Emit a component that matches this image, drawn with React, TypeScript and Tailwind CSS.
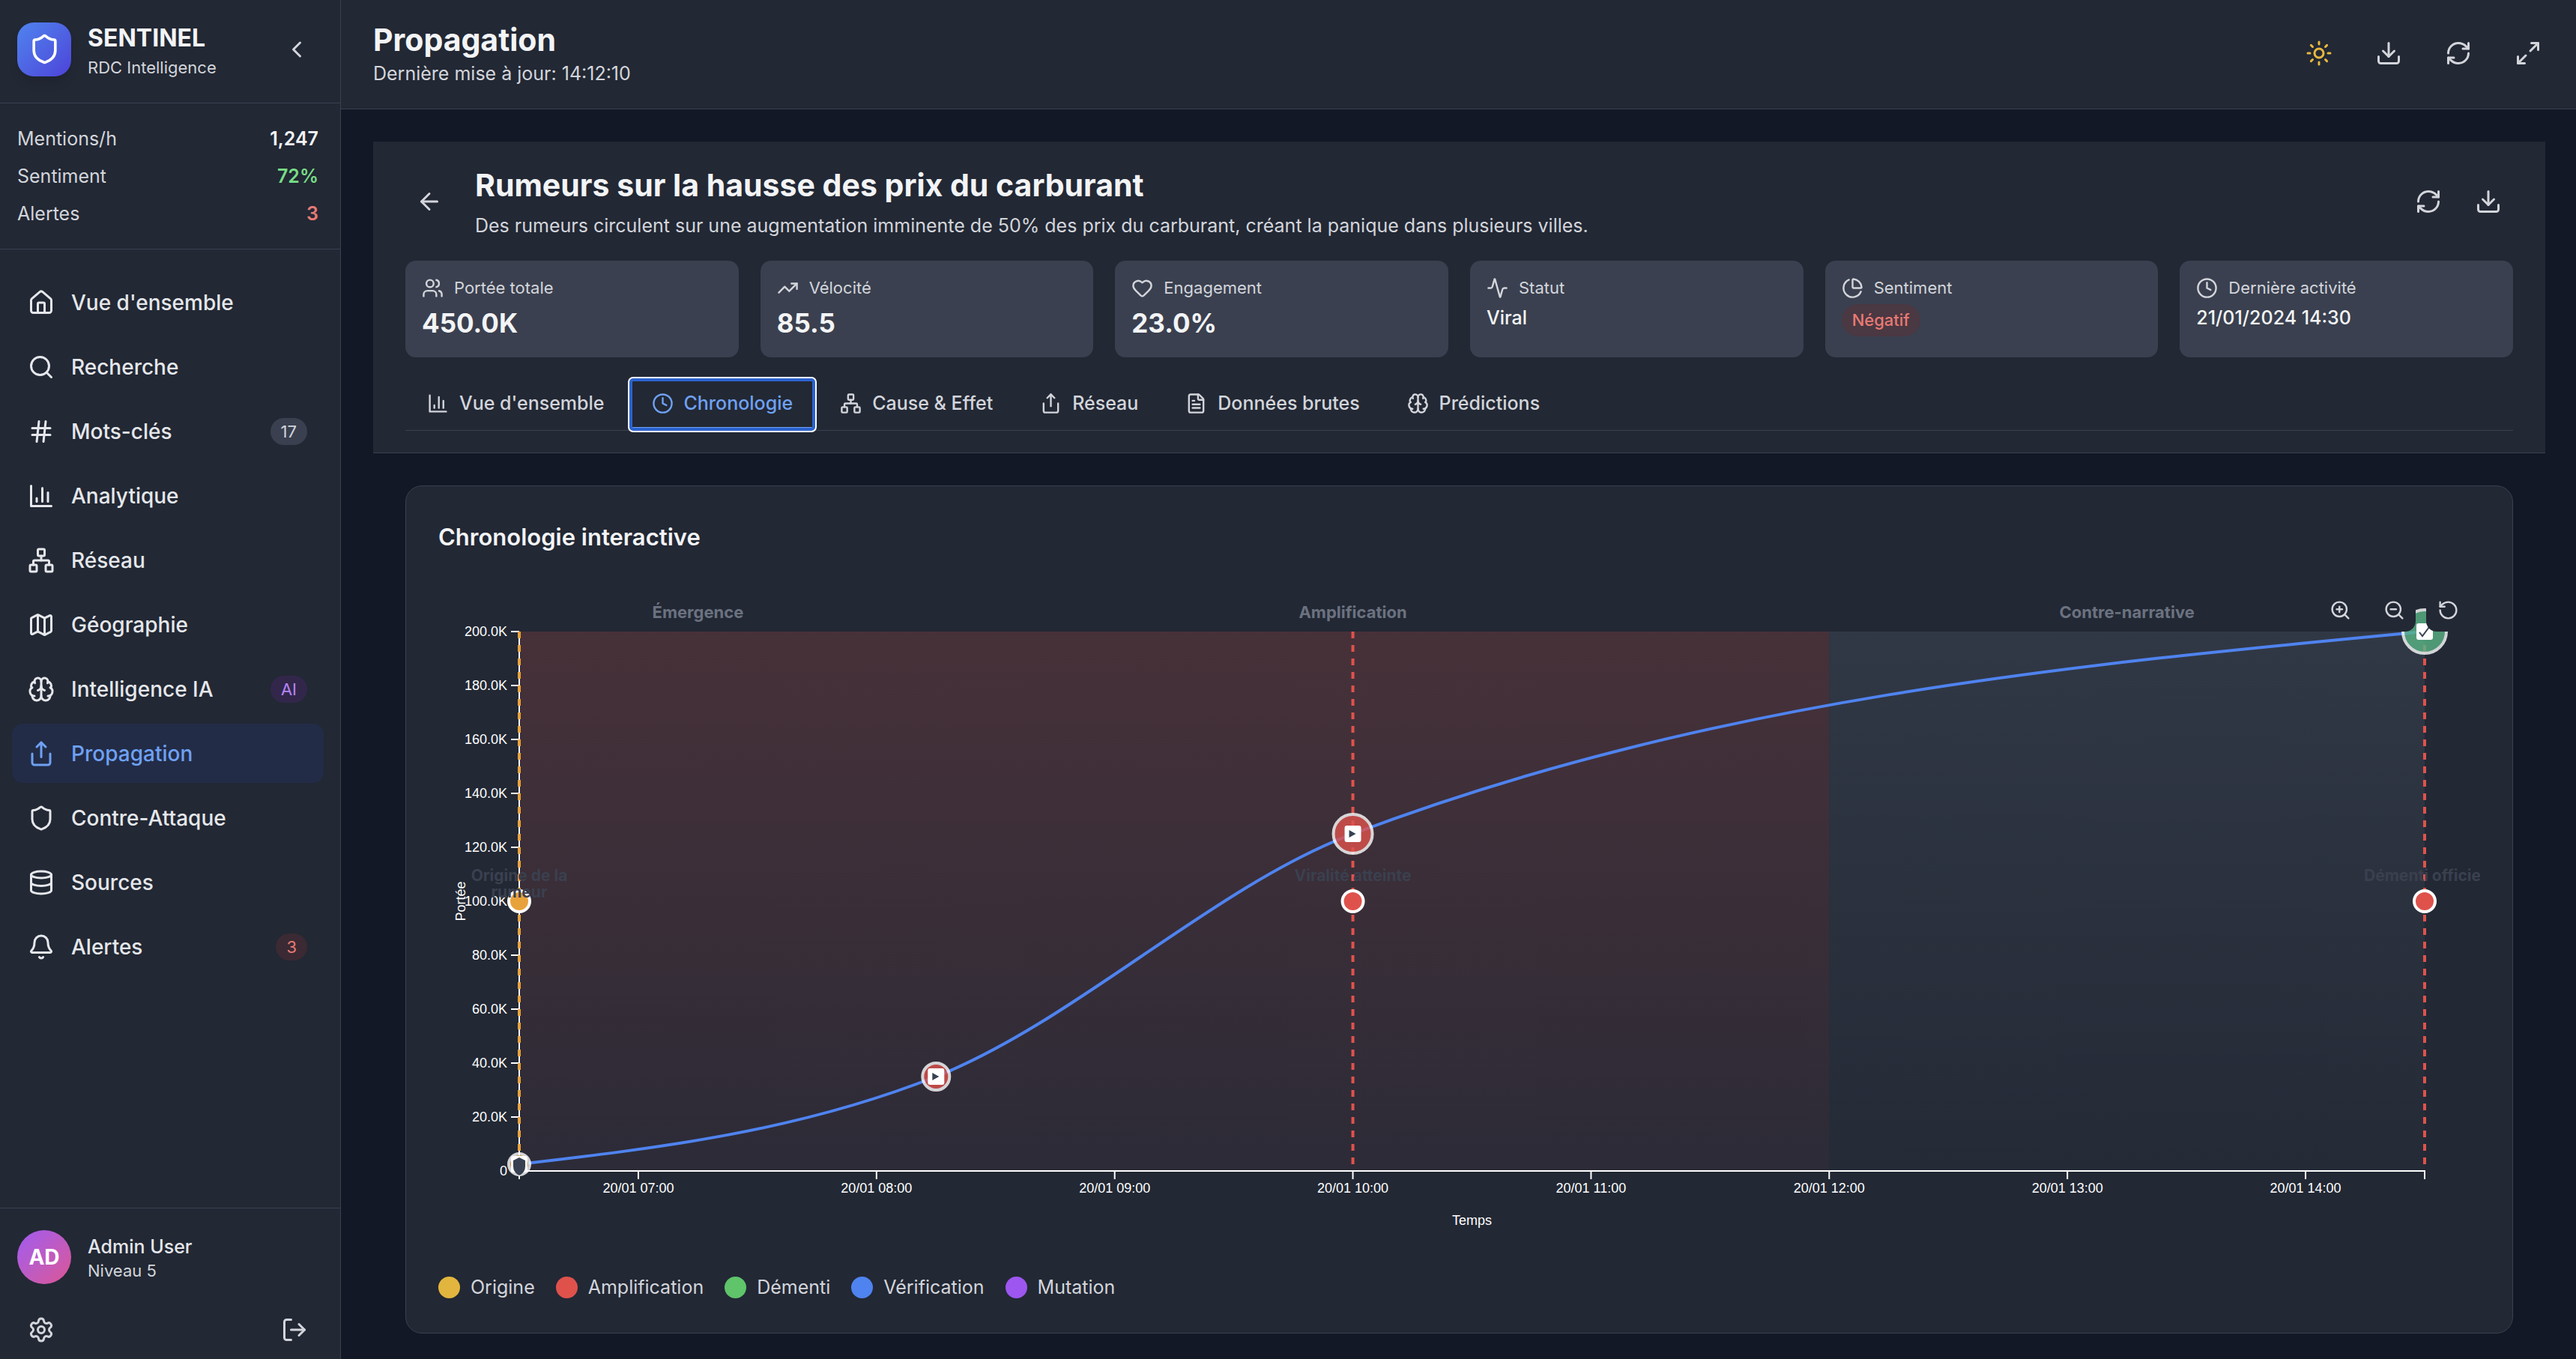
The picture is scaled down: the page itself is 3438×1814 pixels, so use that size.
import React from "react";
import {
  Activity,
  Bell,
  Brain,
  ChartPie,
  ChevronLeft,
  Clock,
  Database,
  Download,
  ArrowLeft,
  FileText,
  Hash,
  Heart,
  House,
  LogOut,
  Map as MapIcon,
  Maximize2,
  Network,
  RefreshCw,
  RotateCcw,
  Search,
  Settings,
  Share,
  Shield,
  Sun,
  TrendingUp,
  Users,
  ZoomIn,
  ZoomOut,
} from "lucide-react";

type IconType = React.ComponentType<{ className?: string; strokeWidth?: number }>;

function BarChartIcon({ className }: { className?: string }) {
  return (
    <svg
      className={className}
      viewBox="0 0 24 24"
      fill="none"
      stroke="currentColor"
      strokeWidth={2}
      strokeLinecap="round"
      strokeLinejoin="round"
      aria-hidden="true"
    >
      <path d="M3 3v18h18" />
      <path d="M18 17V9" />
      <path d="M13 17V5" />
      <path d="M8 17v-3" />
    </svg>
  );
}

const stats = [
  { label: "Mentions/h", value: "1,247", color: "text-[#f3f4f6]" },
  { label: "Sentiment", value: "72%", color: "text-[#77dd85]" },
  { label: "Alertes", value: "3", color: "text-[#e87a74]" },
];

const navItems: { label: string; icon: IconType; badge?: string; badgeClass?: string; active?: boolean }[] = [
  { label: "Vue d'ensemble", icon: House },
  { label: "Recherche", icon: Search },
  { label: "Mots-clés", icon: Hash, badge: "17", badgeClass: "bg-[#3a404f] text-[#d3d5db]" },
  { label: "Analytique", icon: BarChartIcon },
  { label: "Réseau", icon: Network },
  { label: "Géographie", icon: MapIcon },
  { label: "Intelligence IA", icon: Brain, badge: "AI", badgeClass: "bg-[#32274b] text-[#b685f4]" },
  { label: "Propagation", icon: Share, active: true },
  { label: "Contre-Attaque", icon: Shield },
  { label: "Sources", icon: Database },
  { label: "Alertes", icon: Bell, badge: "3", badgeClass: "bg-[#3b2a33] text-[#e87a74]" },
];

function Sidebar() {
  return (
    <aside className="flex w-[455px] shrink-0 flex-col border-r border-[#3a404f] bg-[#222834]">
      <div className="flex items-center border-b border-[#3a404f] pt-[26px] pr-[29px] pb-[32px] pl-[23px]">
        <div className="flex size-[72px] items-center justify-center rounded-[22px] bg-linear-to-br from-[#4f83ef] to-[#4d42d8] text-white shadow-lg">
          <Shield className="size-[43px]" />
        </div>
        <div className="ml-[22px] flex-1">
          <div className="text-[32px] leading-[50px] font-bold text-[#f3f4f6]">SENTINEL</div>
          <div className="text-[22px] leading-[29px] text-[#d3d5db]">RDC Intelligence</div>
        </div>
        <button type="button" aria-label="Réduire le menu" className="p-[11px] text-[#d3d5db]">
          <ChevronLeft className="size-[36px]" />
        </button>
      </div>

      <dl className="flex flex-col gap-[14px] border-b border-[#3a404f] pt-[29px] pr-[29px] pb-[29px] pl-[23px] text-[25px] leading-[36px]">
        {stats.map((s) => (
          <div key={s.label} className="flex justify-between">
            <dt className="text-[#d3d5db]">{s.label}</dt>
            <dd className={"font-semibold " + s.color}>{s.value}</dd>
          </div>
        ))}
      </dl>

      <nav className="flex flex-1 flex-col gap-[7px] pt-[31px] pr-[22px] pl-[16px]">
        {navItems.map(({ label, icon: Icon, badge, badgeClass, active }) => (
          <a
            key={label}
            href="#"
            aria-current={active ? "page" : undefined}
            className={
              "flex h-[79px] items-center gap-[22px] rounded-[14px] pr-[22px] pl-[21px] text-[28px] font-medium " +
              (active ? "bg-[#222c47] text-[#6fa1f3]" : "text-[#e5e7eb]")
            }
          >
            <Icon className="size-[36px] shrink-0" />
            <span className="flex-1">{label}</span>
            {badge && (
              <span className={"rounded-full px-[14px] text-[22px] leading-[36px] font-normal " + badgeClass}>
                {badge}
              </span>
            )}
          </a>
        ))}
      </nav>

      <div className="border-t border-[#3a404f] pt-[29px] pr-[29px] pb-[7px] pl-[23px]">
        <div className="flex items-center gap-[22px]">
          <div className="flex size-[72px] items-center justify-center rounded-full bg-linear-to-br from-[#a058f2] to-[#dc5393] text-[28px] font-bold text-white">
            AD
          </div>
          <div>
            <div className="text-[25px] leading-[36px] font-medium text-[#e5e7eb]">Admin User</div>
            <div className="text-[22px] leading-[29px] text-[#d3d5db]">Niveau 5</div>
          </div>
        </div>
        <div className="mt-[29px] flex justify-between text-[#d3d5db]">
          <button type="button" aria-label="Paramètres" className="p-[14px]">
            <Settings className="size-[36px]" />
          </button>
          <button type="button" aria-label="Déconnexion" className="p-[14px]">
            <LogOut className="size-[36px]" />
          </button>
        </div>
      </div>
    </aside>
  );
}

const headerActions: { label: string; icon: IconType; color: string }[] = [
  { label: "Thème clair", icon: Sun, color: "text-[#e9b83e]" },
  { label: "Télécharger", icon: Download, color: "text-[#d3d5db]" },
  { label: "Actualiser", icon: RefreshCw, color: "text-[#d3d5db]" },
  { label: "Plein écran", icon: Maximize2, color: "text-[#d3d5db]" },
];

function TopBar() {
  return (
    <header className="flex items-center justify-between border-b border-[#3a404f] bg-[#222834] pt-[26px] pr-[32px] pb-[29px] pl-[43px]">
      <div>
        <h1 className="text-[41px] leading-[54px] font-bold text-[#f3f4f6]">Propagation</h1>
        <p className="text-[25px] leading-[36px] text-[#d3d5db]">Dernière mise à jour: 14:12:10</p>
      </div>
      <div className="flex gap-[29px]">
        {headerActions.map(({ label, icon: Icon, color }) => (
          <button key={label} type="button" aria-label={label} className={"p-[14px] " + color}>
            <Icon className="size-[36px]" />
          </button>
        ))}
      </div>
    </header>
  );
}

const metrics: { label: string; icon: IconType; value: string; kind: "number" | "text" | "badge" }[] = [
  { label: "Portée totale", icon: Users, value: "450.0K", kind: "number" },
  { label: "Vélocité", icon: TrendingUp, value: "85.5", kind: "number" },
  { label: "Engagement", icon: Heart, value: "23.0%", kind: "number" },
  { label: "Statut", icon: Activity, value: "Viral", kind: "text" },
  { label: "Sentiment", icon: ChartPie, value: "Négatif", kind: "badge" },
  { label: "Dernière activité", icon: Clock, value: "21/01/2024 14:30", kind: "text" },
];

const metricClass = {
  number: "text-[35px] leading-[50px] font-bold text-[#f3f4f6]",
  text: "text-[25px] leading-[36px] font-medium text-[#f3f4f6]",
  badge: "w-fit rounded-full bg-[#4a3842] px-[14px] py-[7px] text-[22px] leading-[29px] font-medium text-[#e87a74]",
};

const tabs: { label: string; icon: IconType; active?: boolean }[] = [
  { label: "Vue d'ensemble", icon: BarChartIcon },
  { label: "Chronologie", icon: Clock, active: true },
  { label: "Cause & Effet", icon: Network },
  { label: "Réseau", icon: Share },
  { label: "Données brutes", icon: FileText },
  { label: "Prédictions", icon: Brain },
];

function RumorPanel() {
  return (
    <section className="border-b border-[#3a404f] bg-[#222834] px-[43px] py-[29px]">
      <div className="flex items-center gap-[29px]">
        <button type="button" aria-label="Retour" className="p-[14px] text-[#d3d5db]">
          <ArrowLeft className="size-[36px]" />
        </button>
        <div className="flex-1">
          <h2 className="text-[41px] leading-[58px] font-bold text-[#f3f4f6]">
            Rumeurs sur la hausse des prix du carburant
          </h2>
          <p className="mt-[7px] text-[25px] leading-[36px] text-[#d3d5db]">
            Des rumeurs circulent sur une augmentation imminente de 50% des prix du carburant, créant la panique dans
            plusieurs villes.
          </p>
        </div>
        <div className="flex gap-[14px] text-[#d3d5db]">
          <button type="button" aria-label="Actualiser la rumeur" className="p-[15px]">
            <RefreshCw className="size-[36px]" />
          </button>
          <button type="button" aria-label="Exporter la rumeur" className="p-[15px]">
            <Download className="size-[36px]" />
          </button>
        </div>
      </div>

      <div className="mt-[29px] grid grid-cols-6 gap-[29px]">
        {metrics.map(({ label, icon: Icon, value, kind }) => (
          <div key={label} className="rounded-[14px] bg-[#3a404f] p-[22px] pb-[21px]">
            <div className="flex items-center gap-[14px] text-[22px] leading-[29px] text-[#d3d5db]">
              <Icon className="size-[29px]" />
              {label}
            </div>
            <div className={"mt-[7px] " + metricClass[kind]}>{value}</div>
          </div>
        ))}
      </div>

      <div role="tablist" className="mt-[29px] flex gap-[5px] border-b border-[#3a404f]">
        {tabs.map(({ label, icon: Icon, active }) => (
          <button
            key={label}
            type="button"
            role="tab"
            aria-selected={!!active}
            className={
              "flex items-center gap-[14px] border-b-4 px-[29px] py-[14px] text-[25px] leading-[36px] font-medium " +
              (active
                ? "rounded-[4px] border-[#6fa1f3] text-[#6fa1f3] shadow-[0_0_0_3px_#ffffff] outline-4 -outline-offset-3 outline-[#2b62cf]"
                : "border-transparent text-[#d3d5db]")
            }
          >
            <Icon className="size-[29px]" />
            {label}
          </button>
        ))}
      </div>
    </section>
  );
}

/* Chart geometry, in the units of the drawing's view box. */
const VIEW_W = 2725;
const VIEW_H = 900;
const PLOT = { left: 108, right: 2651, top: 72, bottom: 792 };
const START_HOUR = 6.5;
const END_HOUR = 14.5;

const xAt = (hour: number) =>
  PLOT.left + ((hour - START_HOUR) / (END_HOUR - START_HOUR)) * (PLOT.right - PLOT.left);
const yAt = (reach: number) => PLOT.bottom - (reach / 200) * (PLOT.bottom - PLOT.top);

const points = [
  { hour: 6.5, reach: 2.5 },
  { hour: 8.25, reach: 35 },
  { hour: 10, reach: 125 },
  { hour: 14.5, reach: 200 },
].map((p) => ({ x: xAt(p.hour), y: yAt(p.reach) }));

/* Monotone cubic interpolation through the points. */
function monotonePath(pts: { x: number; y: number }[]) {
  const n = pts.length;
  const h = pts.slice(1).map((p, i) => p.x - pts[i].x);
  const s = pts.slice(1).map((p, i) => (p.y - pts[i].y) / h[i]);
  const m: number[] = new Array(n).fill(0);
  for (let i = 1; i < n - 1; i++) {
    const p = (s[i - 1] * h[i] + s[i] * h[i - 1]) / (h[i - 1] + h[i]);
    m[i] =
      (Math.sign(s[i - 1]) + Math.sign(s[i])) * Math.min(Math.abs(s[i - 1]), Math.abs(s[i]), Math.abs(p) / 2);
  }
  m[0] = (3 * s[0] - m[1]) / 2;
  m[n - 1] = (3 * s[n - 2] - m[n - 2]) / 2;
  let d = `M${pts[0].x},${pts[0].y}`;
  for (let i = 0; i < n - 1; i++) {
    const a = pts[i];
    const b = pts[i + 1];
    const t = h[i] / 3;
    d += `C${a.x + t},${a.y + t * m[i]} ${b.x - t},${b.y - t * m[i + 1]} ${b.x},${b.y}`;
  }
  return d;
}

const yTicks = [0, 20, 40, 60, 80, 100, 120, 140, 160, 180, 200];
const xTicks = [7, 8, 9, 10, 11, 12, 13, 14];
const phases = [
  { label: "Émergence", from: 6.5, to: 8 },
  { label: "Amplification", from: 8, to: 12 },
  { label: "Contre-narrative", from: 12, to: 14.5 },
];

function Tile({ x, y }: { x: number; y: number }) {
  return <rect x={x - 11} y={y - 11} width={22} height={22} rx={3} fill="#ffffff" />;
}

function PlayMarker({ x, y, r }: { x: number; y: number; r: number }) {
  return (
    <g>
      <circle cx={x} cy={y} r={r} fill="#df524c" stroke="#ffffff" strokeWidth={4} opacity={0.8} />
      <Tile x={x} y={y} />
      <path d={`M${x - 5},${y - 5} l9,5 l-9,5 z`} fill="#374151" />
    </g>
  );
}

function TimelineChart() {
  const mid = yAt(100);
  const events = [
    { hour: 6.5, color: "#e8a23c" },
    { hour: 10, color: "#df524c" },
    { hour: 14.5, color: "#df524c" },
  ];
  return (
    <svg
      viewBox={`0 0 ${VIEW_W} ${VIEW_H}`}
      className="block w-full overflow-hidden"
      role="img"
      aria-label="Portée de la rumeur dans le temps"
    >
      <defs>
        <linearGradient id="spread" x1="0" y1="0" x2="0" y2="1">
          <stop offset="0" stopColor="#473139" />
          <stop offset="1" stopColor="#2c2b37" />
        </linearGradient>
        <linearGradient id="counter" x1="0" y1="0" x2="0" y2="1">
          <stop offset="0" stopColor="#313845" />
          <stop offset="1" stopColor="#242b37" />
        </linearGradient>
      </defs>

      <rect x={PLOT.left} y={PLOT.top} width={xAt(12) - PLOT.left} height={720} fill="url(#spread)" />
      <rect x={xAt(12)} y={PLOT.top} width={PLOT.right - xAt(12)} height={720} fill="url(#counter)" />

      <g fontFamily="Inter, sans-serif" fontSize={22} fontWeight={700} fill="#6b7280" textAnchor="middle">
        {phases.map((p) => (
          <text key={p.label} x={(xAt(p.from) + xAt(p.to)) / 2} y={54}>
            {p.label}
          </text>
        ))}
      </g>

      <g stroke="#ffffff" strokeWidth={2} fill="none">
        <path d={`M${PLOT.left},${PLOT.top} V${PLOT.bottom}`} />
        <path d={`M${PLOT.left},${PLOT.bottom + 11} V${PLOT.bottom} H${PLOT.right} v11`} />
        {yTicks.map((t) => (
          <path key={t} d={`M${PLOT.left - 11},${yAt(t)} h11`} />
        ))}
        {xTicks.map((t) => (
          <path key={t} d={`M${xAt(t)},${PLOT.bottom} v11`} />
        ))}
      </g>

      <g fontFamily="'Liberation Sans', Arial, sans-serif" fontSize={18} fill="#ffffff">
        {yTicks.map((t) => (
          <text key={t} x={PLOT.left - 16} y={yAt(t) + 6} textAnchor="end">
            {t === 0 ? "0" : `${t}.0K`}
          </text>
        ))}
        {xTicks.map((t) => (
          <text key={t} x={xAt(t)} y={PLOT.bottom + 29} textAnchor="middle">
            {`20/01 ${String(t).padStart(2, "0")}:00`}
          </text>
        ))}
        <text x={(PLOT.left + PLOT.right) / 2} y={864} textAnchor="middle">
          Temps
        </text>
        <text transform={`translate(36 ${mid}) rotate(-90)`} textAnchor="middle">
          Portée
        </text>
      </g>

      <path d={monotonePath(points)} fill="none" stroke="#4f83ef" strokeWidth={4} />

      {events.map((e) => (
        <path
          key={e.hour}
          d={`M${xAt(e.hour)},${PLOT.top} V${PLOT.bottom}`}
          stroke={e.color}
          strokeWidth={4}
          strokeDasharray="9 9"
        />
      ))}

      <g>
        <circle cx={points[0].x} cy={points[0].y} r={14} fill="#e8a23c" stroke="#ffffff" strokeWidth={4} opacity={0.8} />
        <Tile x={points[0].x} y={points[0].y} />
        <path
          d={`M${points[0].x},${points[0].y - 9} l8,4 v8 q0,8 -8,12 q-8,-4 -8,-12 v-8 z`}
          fill="#374151"
        />
      </g>
      <PlayMarker x={points[1].x} y={points[1].y} r={18} />
      <PlayMarker x={points[2].x} y={points[2].y} r={26} />
      <g>
        <circle cx={points[3].x} cy={points[3].y} r={29} fill="#59b586" stroke="#ffffff" strokeWidth={4} opacity={0.8} />
        <Tile x={points[3].x} y={points[3].y} />
        <path
          d={`M${points[3].x - 7},${points[3].y + 1} l4,5 l9,-12`}
          fill="none"
          stroke="#374151"
          strokeWidth={2}
        />
      </g>

      {events.map((e) => (
        <circle key={e.hour} cx={xAt(e.hour)} cy={mid} r={14} fill={e.color} stroke="#ffffff" strokeWidth={4} />
      ))}

      <g fontFamily="Inter, sans-serif" fontSize={21} fontWeight={700} fill="#3a404f" textAnchor="middle">
        <text x={PLOT.left} y={405}>
          Origine de la
        </text>
        <text x={PLOT.left} y={427}>
          rumeur
        </text>
        <text x={xAt(10)} y={405}>
          Viralité atteinte
        </text>
        <text x={2648} y={405}>
          Démenti officie
        </text>
      </g>
    </svg>
  );
}

const legend = [
  { label: "Origine", color: "bg-[#e2b53e]" },
  { label: "Amplification", color: "bg-[#df524c]" },
  { label: "Démenti", color: "bg-[#5fc46a]" },
  { label: "Vérification", color: "bg-[#4f83ef]" },
  { label: "Mutation", color: "bg-[#9d56f0]" },
];

const zoomControls: { label: string; icon: IconType }[] = [
  { label: "Zoom avant", icon: ZoomIn },
  { label: "Zoom arrière", icon: ZoomOut },
  { label: "Réinitialiser", icon: RotateCcw },
];

function TimelineCard() {
  return (
    <section className="mx-[43px] mt-[43px] rounded-[22px] border border-[#3a404f] bg-[#222834] p-[43px]">
      <h3 className="text-[31px] leading-[50px] font-semibold text-[#f3f4f6]">Chronologie interactive</h3>
      <div className="relative mt-[29px]">
        <TimelineChart />
        <div className="absolute top-[14px] right-[14px] flex gap-[14px]">
          {zoomControls.map(({ label, icon: Icon }) => (
            <button
              key={label}
              type="button"
              aria-label={label}
              className="flex size-[58px] items-center justify-center rounded-[14px] bg-[#222834] text-[#d3d5db]"
            >
              <Icon className="size-[29px]" />
            </button>
          ))}
        </div>
      </div>
      <ul className="mt-[29px] flex flex-wrap gap-[28px] text-[25px] leading-[36px] text-[#d3d5db]">
        {legend.map((l) => (
          <li key={l.label} className="flex items-center gap-[14px]">
            <span className={"size-[29px] rounded-full " + l.color} />
            {l.label}
          </li>
        ))}
      </ul>
    </section>
  );
}

export default function App() {
  return (
    <div className="flex min-h-screen bg-[#121825] font-[Inter,sans-serif]">
      <Sidebar />
      <div className="flex min-w-0 flex-1 flex-col">
        <TopBar />
        <main className="flex-1 pt-[43px] pr-[41px] pb-[29px] pl-[43px]">
          <RumorPanel />
          <TimelineCard />
        </main>
      </div>
    </div>
  );
}
